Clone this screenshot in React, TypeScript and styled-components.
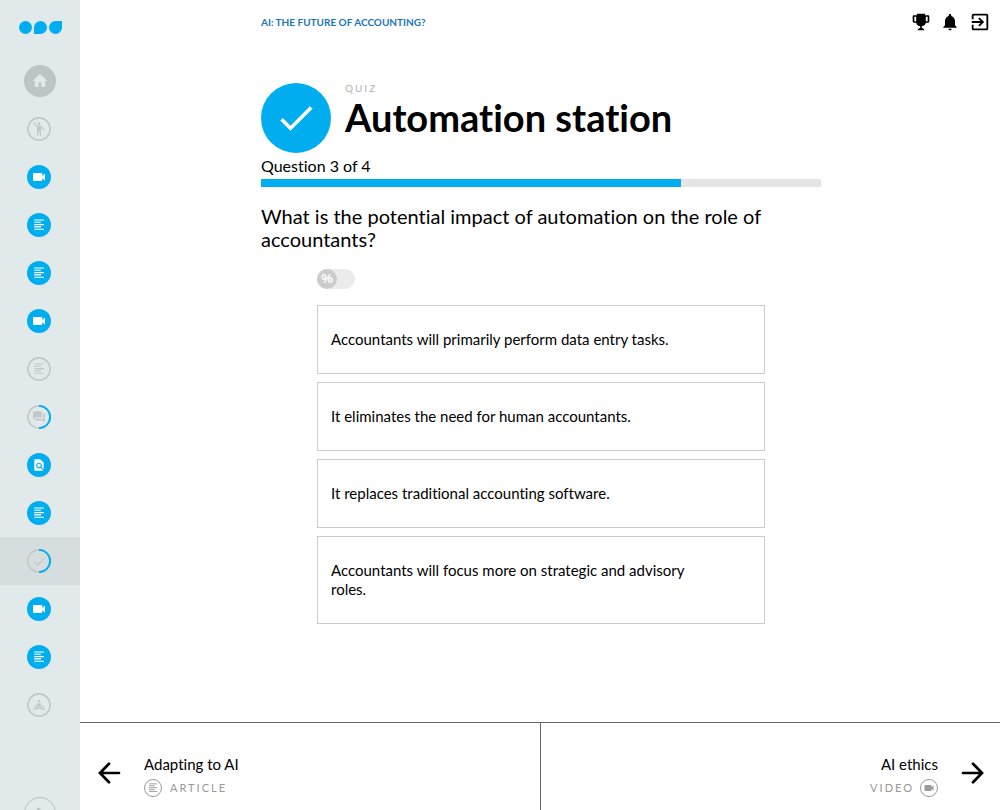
import React from "react";
import styled, { createGlobalStyle, css } from "styled-components";
import {
  MdHome, MdEmojiPeople, MdVideocam, MdForum, MdFindInPage,
  MdCheck, MdNotifications, MdExitToApp, MdChevronRight,
} from "react-icons/md";

const blue = "#00aeef";
const grey = "#c3c9cb";

const GlobalStyle = createGlobalStyle`
  *, *::before, *::after { box-sizing: border-box; }
  body {
    margin: 0;
    background: #fff;
    color: #000;
    font-family: Lato, "Open Sans", sans-serif;
    font-variant-ligatures: none;
  }
  a { color: inherit; text-decoration: none; }
  button { font: inherit; color: inherit; background: none; border: 0; padding: 0; cursor: pointer; }
  h1, h2, p { margin: 0; }
  svg { display: block; }
`;

const Shell = styled.div`
  display: flex;
  height: 100vh;
`;

const Sidebar = styled.nav`
  flex: 0 0 80px;
  display: flex;
  flex-direction: column;
  background: #e1e9eb;
  overflow: hidden;
`;

const LogoLink = styled.a`
  flex: none;
  height: 57px;
  padding: 21px 0 0 19px;
`;

const Steps = styled.div`
  flex: none;
`;

const Step = styled.a<{ $active?: boolean; $wide?: boolean }>`
  display: flex;
  align-items: center;
  justify-content: center;
  height: 48px;
  padding-right: ${(p) => (p.$wide ? 0 : 2)}px;
  background: ${(p) => (p.$active ? "#d5dddf" : "transparent")};
`;

const Disc = styled.span<{ $size: number; $tone: "done" | "home" | "todo" | "partial" | "outline" }>`
  flex: none;
  display: grid;
  place-items: center;
  width: ${(p) => p.$size}px;
  height: ${(p) => p.$size}px;
  border-radius: 50%;
  > * { grid-area: 1 / 1; }
  ${(p) => p.$tone === "done" && css`background: ${blue}; color: #fff;`}
  ${(p) => p.$tone === "home" && css`background: #bcc4c6; color: #e1e9eb;`}
  ${(p) => (p.$tone === "todo" || p.$tone === "partial") && css`color: ${grey};`}
  ${(p) => p.$tone === "outline" && css`border: 1px solid #999; color: #999;`}
`;

const Toggler = styled.button`
  flex: none;
  display: grid;
  place-items: center;
  align-self: center;
  width: 32px;
  height: 32px;
  margin-top: 68px;
  && { border: 1px solid #b9c0c2; color: #b9c0c2; }
  border-radius: 50%;
`;

const Main = styled.main`
  flex: 1;
  min-width: 0;
  display: flex;
  flex-direction: column;
`;

const Scroller = styled.div`
  flex: 1;
  min-height: 0;
  display: grid;
  grid-template-columns: 1fr minmax(0, 560px) 1fr;
  align-content: start;
  padding-left: 2px;
  overflow-y: auto;
`;

const Crumb = styled.a`
  grid-column: 2;
  padding-top: 15px;
  font-size: 10px;
  line-height: 14px;
  font-weight: 700;
  color: #1b75bb;
  text-transform: uppercase;
`;

const Tools = styled.div`
  grid-column: 3;
  display: flex;
  align-items: center;
  justify-content: flex-end;
  gap: 9px;
  height: 32px;
  padding: 12px 9px 0 0;
`;

const Content = styled.article`
  grid-column: 2;
  padding-top: 50px;
`;

const Heading = styled.header`
  display: flex;
  align-items: stretch;
  gap: 14px;
  min-height: 71px;
  > :first-child { align-self: flex-end; }
`;

const Kicker = styled.p`
  font-size: 10px;
  line-height: 12px;
  letter-spacing: 2px;
  color: #b3b3b3;
  text-transform: uppercase;
`;

const Title = styled.h1`
  font-size: 38px;
  line-height: 46px;
  font-weight: 700;
`;

const Count = styled.label`
  display: block;
  padding: 3px 0;
  font-size: 16px;
  line-height: 20px;
`;

const Progress = styled.progress`
  display: block;
  appearance: none;
  width: 100%;
  height: 8px;
  border: 0;
  background: #e5e5e5;
  &::-webkit-progress-bar { background: #e5e5e5; }
  &::-webkit-progress-value { background: ${blue}; }
`;

const Question = styled.h2`
  margin-top: 18px;
  font-size: 20px;
  line-height: 23px;
  font-weight: 400;
`;

const Answers = styled.div`
  display: flex;
  flex-direction: column;
  gap: 8px;
  padding: 18px 56px 0;
`;

const Switch = styled.label`
  display: block;
  width: 38px;
  height: 20px;
  margin-bottom: 8px;
  border-radius: 10px;
  background: #ebebeb;
`;

const SwitchInput = styled.input`
  appearance: none;
  display: grid;
  place-items: center;
  width: 20px;
  height: 20px;
  margin: 0;
  border-radius: 50%;
  background: #ccc;
  color: #fff;
  &::before { content: "%"; font-size: 13px; line-height: 20px; font-weight: 700; }
`;

const Answer = styled.button`
  && {
    padding: 24px 72px 24px 13px;
    border: 1px solid #ccc;
    font-size: 15px;
    line-height: 19px;
    text-align: left;
  }
`;

const Pager = styled.footer`
  flex: 0 0 88px;
  display: grid;
  grid-template-columns: 1fr 1fr;
  border-top: 1px solid #666;
`;

const PageLink = styled.a<{ $next?: boolean }>`
  display: flex;
  flex-direction: ${(p) => (p.$next ? "row-reverse" : "row")};
  gap: 20px;
  padding: ${(p) => (p.$next ? "31px 14px 0" : "31px 16px 0")};
  border-left: ${(p) => (p.$next ? "1px solid #666" : "0")};
  text-align: ${(p) => (p.$next ? "right" : "left")};
`;

const ArrowBox = styled.span<{ $flip?: boolean }>`
  padding-top: 5px;
  svg { transform: ${(p) => (p.$flip ? "scaleX(-1)" : "none")}; }
`;

const PageText = styled.span`
  font-size: 15px;
  line-height: 20px;
`;

const PageKind = styled.span<{ $end?: boolean }>`
  display: flex;
  align-items: center;
  justify-content: ${(p) => (p.$end ? "flex-end" : "flex-start")};
  gap: ${(p) => (p.$end ? 6 : 8)}px;
  height: 18px;
  margin-top: 5px;
  font-size: 11px;
  letter-spacing: 2px;
  color: #999;
  text-transform: uppercase;
`;

const Logo = () => (
  <svg width="43" height="13" viewBox="0 0 43 13" fill={blue} aria-hidden="true">
    <circle cx="6.5" cy="6.5" r="6.5" />
    <path d="M15 13V6.5A6.5 6.5 0 1 1 21.5 13Z" />
    <path d="M43 0V6.5A6.5 6.5 0 1 1 36.5 0Z" />
  </svg>
);

const Ring = ({ half }: { half?: boolean }) => (
  <svg width="24" height="24" viewBox="0 0 24 24" fill="none" strokeWidth="1.6" aria-hidden="true">
    <circle cx="12" cy="12" r="11.1" stroke={grey} />
    {half && <path d="M12 .9A11.1 11.1 0 0 1 12 23.1" stroke={blue} strokeWidth="1.9" />}
  </svg>
);

const Lines = ({ size = 12 }: { size?: number }) => (
  <svg width={size} height={size} viewBox="0 0 12 12" stroke="currentColor" strokeWidth="1.1" aria-hidden="true">
    <path d="M1.2 1H11M1.2 3.300H8M1.2 5.600H11M1.2 7.900H8M1.2 10.200H11" />
  </svg>
);

const Trophy = () => (
  <svg width="20" height="20" viewBox="0 0 24 24" fillRule="evenodd" aria-hidden="true">
    <path d="M7 2H17V4H20.500C21.400 4 22 4.600 22 5.500V11C22 12 21 13 20 13H17.800C17.400 15 16.1 16.7 13 17V19.1C16 19.500 16 22 16 22H8C8 22 8 19.500 11 19.1V17C7.900 16.7 6.600 15 6.200 13H4C3 13 2 12 2 11V5.500C2 4.600 2.600 4 3.500 4H7ZM6.200 5.800H4V11H6.200ZM17.800 5.800V11H20V5.800Z" />
  </svg>
);

const Meditate = () => (
  <svg width="14" height="14" viewBox="0 0 14 14" fill="none" stroke="currentColor" strokeLinecap="round" aria-hidden="true">
    <circle cx="7" cy="3" r="1.2" fill="currentColor" stroke="none" />
    <path d="M6 5.3h2l.6 3.2H5.4z" fill="currentColor" stroke="none" />
    <path d="M6 5.8L4.6 8 2.2 8.8M8 5.8L9.4 8 11.8 8.8" strokeWidth="1.1" />
    <path d="M1.5 11.3l4.500-2 5 2.200M12.500 11.3l-4.500-2-5 2.200" strokeWidth="1.200" />
  </svg>
);

const BoldArrow = () => (
  <svg width="28" height="28" viewBox="0 0 28 28" fill="none" stroke="#000" strokeWidth="2.7" aria-hidden="true">
    <path d="M23 14H4.500M13 4.800L4 14l9 9.200" strokeLinecap="round" />
  </svg>
);

type Kind = "video" | "article" | "people" | "forum" | "find" | "check" | "calm";
type Tone = "done" | "todo" | "partial";

const icons: Record<Kind, React.ReactNode> = {
  video: <MdVideocam size={16} />,
  article: <Lines />,
  people: <MdEmojiPeople size={16} />,
  forum: <MdForum size={14} />,
  find: <MdFindInPage size={14} />,
  check: <MdCheck size={15} />,
  calm: <Meditate />,
};

const steps: { kind: Kind; tone: Tone; active?: boolean }[] = [
  { kind: "people", tone: "todo" },
  { kind: "video", tone: "done" },
  { kind: "article", tone: "done" },
  { kind: "article", tone: "done" },
  { kind: "video", tone: "done" },
  { kind: "article", tone: "todo" },
  { kind: "forum", tone: "partial" },
  { kind: "find", tone: "done" },
  { kind: "article", tone: "done" },
  { kind: "check", tone: "partial", active: true },
  { kind: "video", tone: "done" },
  { kind: "article", tone: "done" },
  { kind: "calm", tone: "todo" },
];

const answers = [
  "Accountants will primarily perform data entry tasks.",
  "It eliminates the need for human accountants.",
  "It replaces traditional accounting software.",
  "Accountants will focus more on strategic and advisory roles.",
];

export default function App() {
  return (
    <Shell>
      <GlobalStyle />
      <Sidebar aria-label="Course steps">
        <LogoLink href="#" aria-label="Start"><Logo /></LogoLink>
        <Steps>
          <Step href="#" $wide aria-label="Home">
            <Disc $size={32} $tone="home"><MdHome size={18} /></Disc>
          </Step>
          {steps.map((s, i) => (
            <Step key={i} href="#" $active={s.active} aria-label={s.kind}>
              <Disc $size={24} $tone={s.tone}>
                {s.tone !== "done" && <Ring half={s.tone === "partial"} />}
                {icons[s.kind]}
              </Disc>
            </Step>
          ))}
        </Steps>
        <Toggler aria-label="Expand menu"><MdChevronRight size={24} /></Toggler>
      </Sidebar>
      <Main>
        <Scroller>
          <Crumb href="#">AI: The future of accounting?</Crumb>
          <Tools>
            <button aria-label="Achievements"><Trophy /></button>
            <button aria-label="Notifications"><MdNotifications size={20} /></button>
            <button aria-label="Exit"><MdExitToApp size={22} /></button>
          </Tools>
          <Content>
            <Heading>
              <Disc $size={70} $tone="done"><MdCheck size={44} /></Disc>
              <div>
                <Kicker>Quiz</Kicker>
                <Title>Automation station</Title>
              </div>
            </Heading>
            <Count htmlFor="progress">Question 3 of 4</Count>
            <Progress id="progress" value={3} max={4} />
            <Question>What is the potential impact of automation on the role of accountants?</Question>
            <Answers>
              <Switch><SwitchInput type="checkbox" aria-label="Show percentages" /></Switch>
              {answers.map((a) => <Answer key={a}>{a}</Answer>)}
            </Answers>
          </Content>
        </Scroller>
        <Pager>
          <PageLink href="#">
            <ArrowBox><BoldArrow /></ArrowBox>
            <PageText>
              Adapting to AI
              <PageKind><Disc $size={18} $tone="outline"><Lines size={10} /></Disc>Article</PageKind>
            </PageText>
          </PageLink>
          <PageLink href="#" $next>
            <ArrowBox $flip><BoldArrow /></ArrowBox>
            <PageText>
              AI ethics
              <PageKind $end>Video<Disc $size={18} $tone="outline"><MdVideocam size={12} /></Disc></PageKind>
            </PageText>
          </PageLink>
        </Pager>
      </Main>
    </Shell>
  );
}
